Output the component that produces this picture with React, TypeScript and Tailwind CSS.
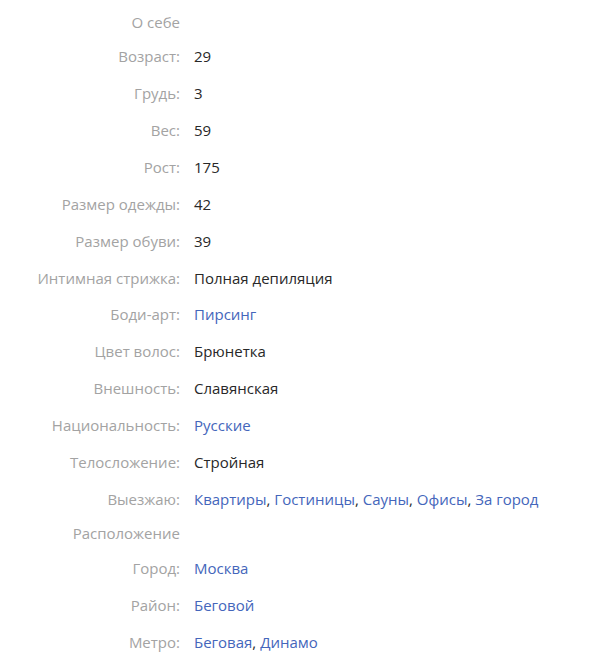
import React from "react";

type Row = {
  label: string;
  value?: string;
  links?: string[];
  section?: boolean;
};

const rows: Row[] = [
  { label: "О себе", section: true },
  { label: "Возраст:", value: "29" },
  { label: "Грудь:", value: "3" },
  { label: "Вес:", value: "59" },
  { label: "Рост:", value: "175" },
  { label: "Размер одежды:", value: "42" },
  { label: "Размер обуви:", value: "39" },
  { label: "Интимная стрижка:", value: "Полная депиляция" },
  { label: "Боди-арт:", links: ["Пирсинг"] },
  { label: "Цвет волос:", value: "Брюнетка" },
  { label: "Внешность:", value: "Славянская" },
  { label: "Национальность:", links: ["Русские"] },
  { label: "Телосложение:", value: "Стройная" },
  {
    label: "Выезжаю:",
    links: ["Квартиры", "Гостиницы", "Сауны", "Офисы", "За город"],
  },
  { label: "Расположение", section: true },
  { label: "Город:", links: ["Москва"] },
  { label: "Район:", links: ["Беговой"] },
  { label: "Метро:", links: ["Беговая", "Динамо"] },
];

export default function App() {
  return (
    <div
      className="bg-white w-[600px] min-h-[653px] pt-[6px] text-[15px]"
      style={{ fontFamily: '"Open Sans", "Noto Sans", sans-serif' }}
    >
      {rows.map((row) => (
        <div
          key={row.label}
          className={
            row.section
              ? "flex items-center h-[32px]"
              : "flex items-center h-[36.9px]"
          }
        >
          <div className="w-[180px] shrink-0 text-right text-[#a3a3a3]">
            {row.label}
          </div>
          <div className="pl-[14px] text-[#282828]">
            {row.value}
            {row.links &&
              row.links.map((l, i) => (
                <span key={l}>
                  <a href="#" className="text-[#4466bb]">
                    {l}
                  </a>
                  {i < row.links!.length - 1 && ", "}
                </span>
              ))}
          </div>
        </div>
      ))}
    </div>
  );
}
